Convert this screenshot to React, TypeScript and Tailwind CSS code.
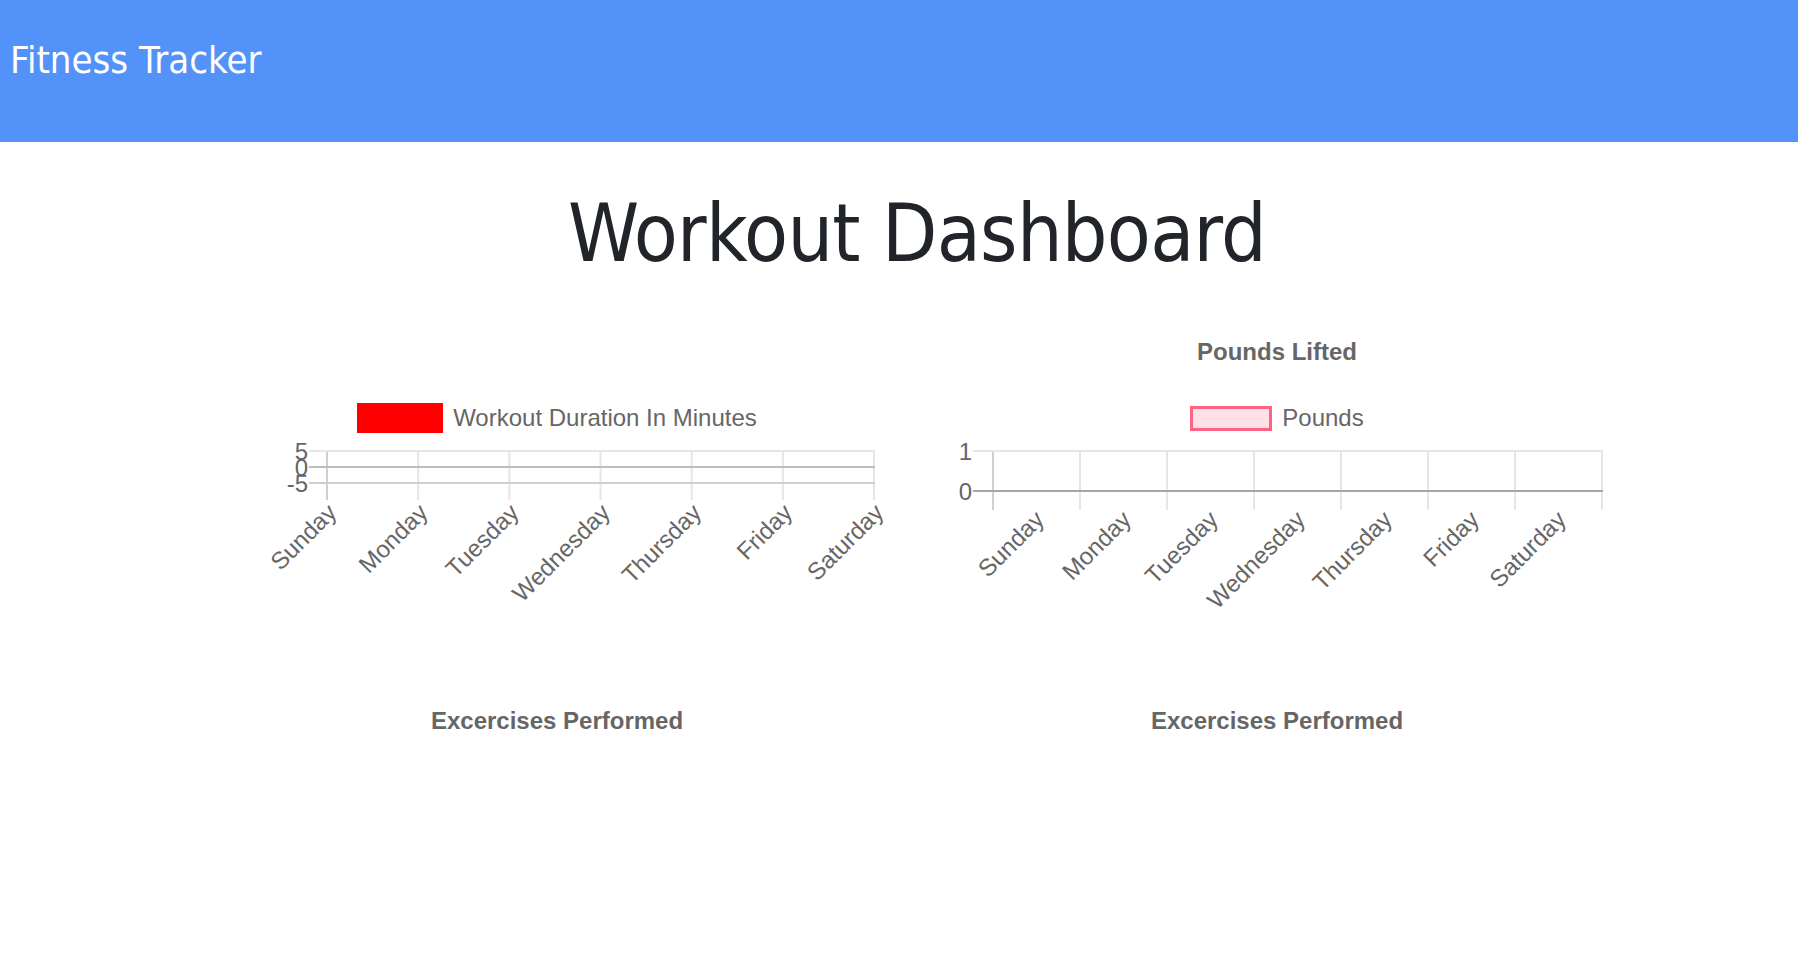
const DAYS = ["Sunday", "Monday", "Tuesday", "Wednesday", "Thursday", "Friday", "Saturday"];

// line chart, labels sit on the grid lines
function DurationPlot() {
  const xs = DAYS.map((_, i) => 130 + i * 91.17);
  return (
    <svg width="720" height="210" className="block" fontFamily="'Liberation Sans', Arial, sans-serif" fontSize="24" fill="#666">
      {xs.map((x, i) => (
        <line key={x} x1={x} x2={x} y1={18} y2={67} stroke={i === 0 ? "#cfcfcf" : "#e6e6e6"} strokeWidth="2" />
      ))}
      <line x1="112" x2="678" y1="18" y2="18" stroke="#e6e6e6" strokeWidth="2" />
      <line x1="112" x2="678" y1="34" y2="34" stroke="#bdbdbd" strokeWidth="2" />
      <line x1="112" x2="678" y1="50" y2="50" stroke="#cfcfcf" strokeWidth="2" />
      <text x="111" y="18" textAnchor="end" dominantBaseline="central">5</text>
      <text x="111" y="34" textAnchor="end" dominantBaseline="central">0</text>
      <text x="111" y="50" textAnchor="end" dominantBaseline="central">-5</text>
      {DAYS.map((d, i) => (
        <text key={d} x={xs[i] + 5} y={75} textAnchor="end" dominantBaseline="central" transform={`rotate(-45 ${xs[i] + 5} 75)`}>
          {d}
        </text>
      ))}
    </svg>
  );
}

// bar chart, labels sit between the grid lines
function PoundsPlot() {
  const lines = [0, 1, 2, 3, 4, 5, 6, 7].map((i) => 76 + i * 87);
  return (
    <svg width="720" height="210" className="block" fontFamily="'Liberation Sans', Arial, sans-serif" fontSize="24" fill="#666">
      {lines.map((x, i) => (
        <line key={x} x1={x} x2={x} y1={18} y2={77} stroke={i === 0 ? "#cfcfcf" : "#e6e6e6"} strokeWidth="2" />
      ))}
      <line x1="56" x2="686" y1="18" y2="18" stroke="#e6e6e6" strokeWidth="2" />
      <line x1="56" x2="686" y1="58" y2="58" stroke="#a6a6a6" strokeWidth="2" />
      <text x="55" y="18" textAnchor="end" dominantBaseline="central">1</text>
      <text x="55" y="58" textAnchor="end" dominantBaseline="central">0</text>
      {DAYS.map((d, i) => {
        const x = 119.5 + i * 87 + 3;
        return (
          <text key={d} x={x} y={82} textAnchor="end" dominantBaseline="central" transform={`rotate(-45 ${x} 82)`}>
            {d}
          </text>
        );
      })}
    </svg>
  );
}

function ChartTitle({ text }: { text: string }) {
  return <div className="h-6 text-center text-[24px] leading-6 font-bold text-[#666]">{text}</div>;
}

export default function App() {
  return (
    <div className="min-h-[976px] bg-white">
      <header className="h-[142px] bg-[#5393f9] pl-[10px] pt-[41px]">
        <h1 className="text-[38px] leading-none text-white font-[DejaVu_Sans_Condensed,DejaVu_Sans,sans-serif] font-stretch-condensed">
          Fitness Tracker
        </h1>
      </header>

      <main className="pl-9" style={{ fontFamily: "'Liberation Sans', Arial, sans-serif" }}>
        <h1 className="mt-[52px] text-center text-[80px] leading-none text-[#212529] font-[DejaVu_Sans_Condensed,DejaVu_Sans,sans-serif] font-stretch-condensed tracking-[-0.7px]">
          Workout Dashboard
        </h1>

        <div className="mx-auto mt-[66px] grid w-[1440px] grid-cols-2">
          <div>
            <ChartTitle text="" />
            <div className="mt-[39px] flex h-[30px] items-center justify-center gap-2.5">
              <span className="h-[30px] w-[86px] bg-[#ff0000]" />
              <span className="text-[24px] text-[#666]">Workout Duration In Minutes</span>
            </div>
            <DurationPlot />
          </div>
          <div>
            <ChartTitle text="Pounds Lifted" />
            <div className="mt-[39px] flex h-[30px] items-center justify-center gap-2.5">
              <span className="h-[25px] w-[82px] border-[3px] border-[#ff6384] bg-[#ffe0e6]" />
              <span className="text-[24px] text-[#666]">Pounds</span>
            </div>
            <PoundsPlot />
          </div>
        </div>

        <div className="mx-auto mt-[66px] grid w-[1440px] grid-cols-2">
          <ChartTitle text="Excercises Performed" />
          <ChartTitle text="Excercises Performed" />
        </div>
      </main>
    </div>
  );
}
